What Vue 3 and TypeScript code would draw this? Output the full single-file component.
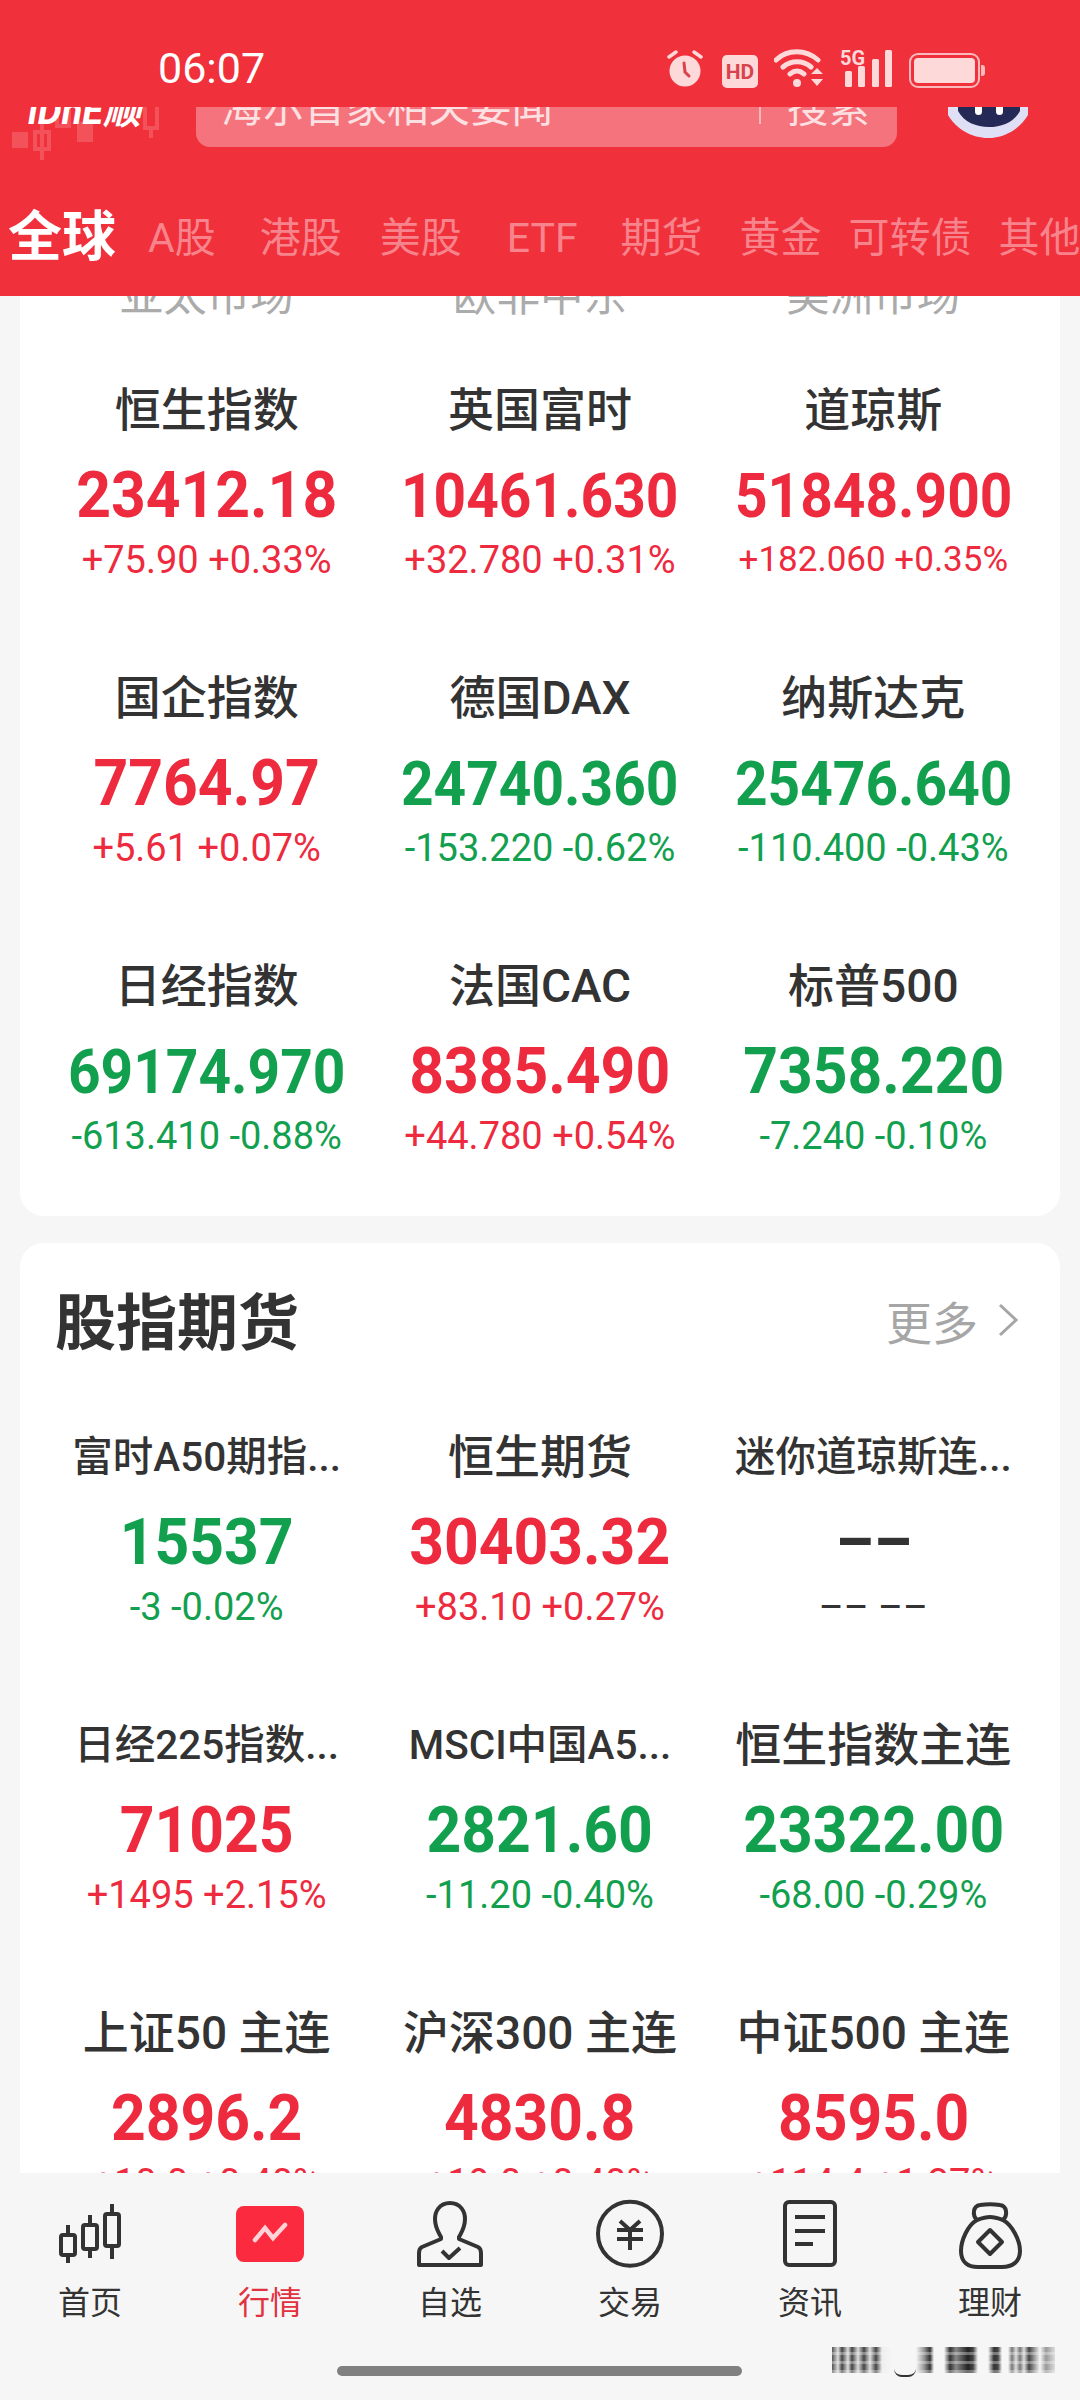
<script setup lang="ts">
type Quote = {
  name: string;
  value: string;
  change: string;
  tone: "up" | "down" | "flat";
  small?: boolean;
  tight?: boolean;
};

const tabs = [
  { label: "A股", gap: 32 },
  { label: "港股", gap: 44 },
  { label: "美股", gap: 38 },
  { label: "ETF", gap: 45 },
  { label: "期货", gap: 43 },
  { label: "黄金", gap: 37 },
  { label: "可转债", gap: 27 },
  { label: "其他", gap: 27 },
];
const markets = ["亚太市场", "欧非中东", "美洲市场"];

const globalQuotes: Quote[] = [
  { name: "恒生指数", value: "23412.18", change: "+75.90 +0.33%", tone: "up" },
  { name: "英国富时", value: "10461.630", change: "+32.780 +0.31%", tone: "up" },
  { name: "道琼斯", value: "51848.900", change: "+182.060 +0.35%", tone: "up", tight: true },
  { name: "国企指数", value: "7764.97", change: "+5.61 +0.07%", tone: "up" },
  { name: "德国DAX", value: "24740.360", change: "-153.220 -0.62%", tone: "down" },
  { name: "纳斯达克", value: "25476.640", change: "-110.400 -0.43%", tone: "down" },
  { name: "日经指数", value: "69174.970", change: "-613.410 -0.88%", tone: "down" },
  { name: "法国CAC", value: "8385.490", change: "+44.780 +0.54%", tone: "up" },
  { name: "标普500", value: "7358.220", change: "-7.240 -0.10%", tone: "down" },
];

const futures: Quote[] = [
  { name: "富时A50期指...", value: "15537", change: "-3 -0.02%", tone: "down", small: true },
  { name: "恒生期货", value: "30403.32", change: "+83.10 +0.27%", tone: "up" },
  { name: "迷你道琼斯连...", value: "––", change: "–– ––", tone: "flat", small: true },
  { name: "日经225指数...", value: "71025", change: "+1495 +2.15%", tone: "up", small: true },
  { name: "MSCI中国A5...", value: "2821.60", change: "-11.20 -0.40%", tone: "down", small: true },
  { name: "恒生指数主连", value: "23322.00", change: "-68.00 -0.29%", tone: "down" },
  { name: "上证50 主连", value: "2896.2", change: "+10.0 +0.40%", tone: "up" },
  { name: "沪深300 主连", value: "4830.8", change: "+19.0 +0.40%", tone: "up" },
  { name: "中证500 主连", value: "8595.0", change: "+114.4 +1.37%", tone: "up" },
];

const navItems = ["首页", "行情", "自选", "交易", "资讯", "理财"];
</script>

<template>
  <div class="page">
    <header class="header">
      <div class="status">
        <span class="time">06:07</span>
        <div class="status-icons">
          <svg class="alarm" width="36" height="38" viewBox="0 0 36 38">
            <circle cx="18" cy="21" r="15.5" fill="#fdd9da" />
            <path d="M2 7l7-5M34 7l-7-5" stroke="#fdd9da" stroke-width="3.4" stroke-linecap="round" />
            <path d="M17 13l1 9 4 4" stroke="#d8434c" stroke-width="3" fill="none" stroke-linecap="round" />
          </svg>
          <svg width="36" height="33" viewBox="0 0 36 33">
            <rect width="36" height="33" rx="5" fill="#fdd9da" />
            <text x="18" y="24" text-anchor="middle" class="hd">HD</text>
          </svg>
          <svg width="50" height="39" viewBox="0 0 50 39">
            <path d="M2 11C13 0 32 0 44 11M9 18C17 11 29 11 37 18M16 25c5-4 9-4 14 0" stroke="#fdd9da" stroke-width="5" fill="none" stroke-linecap="round" />
            <circle cx="23" cy="34" r="4" fill="#fdd9da" />
            <path d="M37 25h12l-6-6zM37 30h12l-6 7z" fill="#fdd9da" />
          </svg>
          <svg width="53" height="39" viewBox="0 0 53 39">
            <text x="0" y="16" class="five-g">5G</text>
            <rect x="5" y="22" width="7" height="16" rx="1.5" fill="#fdd9da" />
            <rect x="18" y="17" width="7" height="21" rx="1.5" fill="#fdd9da" />
            <rect x="32" y="10" width="7" height="28" rx="1.5" fill="#fdd9da" />
            <rect x="45" y="1" width="7" height="37" rx="1.5" fill="#fdd9da" />
          </svg>
          <svg width="76" height="35" viewBox="0 0 76 35">
            <rect x="1" y="1" width="69" height="33" rx="8" fill="none" stroke="#fbb9bc" stroke-width="2" />
            <rect x="5" y="5" width="61" height="25" rx="4" fill="#fdd9da" />
            <path d="M72 12h1c2 0 3 1 3 3v5c0 2-1 3-3 3h-1z" fill="#fbb9bc" />
          </svg>
        </div>
      </div>

      <div class="search-row">
        <svg class="candles" width="160" height="60" viewBox="0 0 160 60">
          <g fill="#f4525b">
            <rect x="12" y="25" width="16" height="16" />
            <rect x="77" y="15" width="16" height="20" />
          </g>
          <g fill="none" stroke="#f4525b" stroke-width="4">
            <path d="M35 25h14v17H35zM42 15v38" />
            <path d="M57 0v19h12V0" />
            <path d="M145 0v21h12V0M151 21v10" />
          </g>
        </svg>
        <span class="logo">iDnE顺</span>
        <div class="search">
          <span class="search-text">海尔首家相关要闻</span>
          <i class="search-line"></i>
          <span class="search-btn">搜索</span>
        </div>
        <svg class="robot" width="84" height="44" viewBox="0 0 84 44">
          <path d="M2 0H82V18C74 32 58 41 42 41S10 32 2 18Z" fill="#dfe0f6" />
          <path d="M12 0H74V14C68 25 56 30 43 30S18 25 12 14Z" fill="#242a55" />
          <rect x="29" y="0" width="7" height="18" rx="3.5" fill="#fff" />
          <rect x="50" y="0" width="7" height="18" rx="3.5" fill="#fff" />
        </svg>
      </div>

      <nav class="tabs">
        <span class="tab-active">全球</span>
        <span v-for="tab in tabs" :key="tab.label" class="tab" :style="{ marginLeft: tab.gap + 'px' }">{{ tab.label }}</span>
      </nav>
    </header>

    <main class="content">
      <section class="card card-top">
        <div class="markets">
          <span v-for="m in markets" :key="m">{{ m }}</span>
        </div>
        <div class="grid">
          <div v-for="q in globalQuotes" :key="q.name" class="cell">
            <div class="name">{{ q.name }}</div>
            <div class="value" :class="[q.tone, { long: q.value.length > 8 }]">{{ q.value }}</div>
            <div class="change" :class="[q.tone, { tight: q.tight }]">{{ q.change }}</div>
          </div>
        </div>
      </section>

      <section class="card card-futures">
        <div class="card-head">
          <h2>股指期货</h2>
          <span class="more">更多
            <svg width="20" height="34" viewBox="0 0 20 34">
              <path d="M2 2l16 15L2 32" fill="none" stroke="#a6a6a6" stroke-width="3" />
            </svg>
          </span>
        </div>
        <div class="grid">
          <div v-for="q in futures" :key="q.name" class="cell">
            <div class="name" :class="{ small: q.small }">{{ q.name }}</div>
            <div class="value" :class="[q.tone, { long: q.value.length > 8 }]">{{ q.value }}</div>
            <div class="change" :class="q.tone">{{ q.change }}</div>
          </div>
        </div>
      </section>
    </main>

    <footer class="nav">
      <div v-for="(item, i) in navItems" :key="item" class="nav-item" :class="{ active: i === 1 }">
        <svg v-if="i === 0" width="100" height="80" viewBox="0 0 100 80" fill="none" stroke="#333" stroke-width="4">
          <path d="M28 30v38M50 20v43M72 9v55" />
          <rect x="21" y="40" width="14" height="20" rx="2" fill="#f6f6f6" />
          <rect x="43" y="30" width="14" height="24" rx="2" fill="#f6f6f6" />
          <rect x="65" y="19" width="14" height="32" rx="2" fill="#f6f6f6" />
        </svg>
        <svg v-else-if="i === 1" width="100" height="80" viewBox="0 0 100 80" fill="none">
          <rect x="16" y="11" width="68" height="56" rx="8" fill="#fb2a3f" />
          <path d="M35 45l10-12 8 10 12-13" stroke="#ffd3d7" stroke-width="4.5" stroke-linecap="round" />
        </svg>
        <svg v-else-if="i === 2" width="100" height="80" viewBox="0 0 100 80" fill="none" stroke="#333" stroke-width="4" stroke-linejoin="round">
          <path d="M50 8C39 8 35 17 35 24c0 9 4 14 6 18v2l-19 8c-2 1-3 3-3 6v12h62V58c0-3-1-5-3-6l-19-8v-2c2-4 6-9 6-18C65 17 61 8 50 8z" />
          <path d="M42 56l7 7 11-10" />
        </svg>
        <svg v-else-if="i === 3" width="100" height="80" viewBox="0 0 100 80" fill="none" stroke="#333" stroke-width="4">
          <circle cx="50" cy="38.7" r="32" />
          <path d="M40 26l10 9 10-9M37 35h26M37 44h26M50 35v20" />
        </svg>
        <svg v-else-if="i === 4" width="100" height="80" viewBox="0 0 100 80" fill="none" stroke="#333" stroke-width="4">
          <rect x="25" y="7" width="50" height="63" rx="4" />
          <path d="M35 22h30M35 36h30M35 49h18" />
        </svg>
        <svg v-else width="100" height="80" viewBox="0 0 100 80" fill="none" stroke="#333" stroke-width="4" stroke-linejoin="round">
          <path d="M37 25c-5-5-4-14 3-15 6-1 14-1 20 0 7 1 8 10 3 15" />
          <path d="M37 25c11-4 15-4 26 0 9 5 17 20 17 31 0 11-8 16-18 16H38c-10 0-17-5-17-16 0-11 7-26 16-31z" />
          <path d="M50 35l12 12-12 12-12-12z" />
        </svg>
        <span class="nav-label">{{ item }}</span>
      </div>
      <div class="home-bar"></div>
      <div class="watermark"></div>
    </footer>
  </div>
</template>

<style scoped>
.page {
  position: relative;
  width: 1080px;
  height: 2400px;
  overflow: hidden;
  background: #f6f6f6;
  font-family: Roboto, "Noto Sans CJK SC", sans-serif;
  color: #333;
}
.header {
  position: relative;
  z-index: 2;
  height: 296px;
  overflow: hidden;
  background: #f0303a;
}
.status {
  position: relative;
  z-index: 2;
  height: 107px;
  display: flex;
  align-items: flex-end;
  justify-content: space-between;
  padding: 0 95px 19px 158px;
  box-sizing: border-box;
  background: #f0303a;
}
.time {
  margin-bottom: -4px;
  font-size: 43px;
  line-height: 48px;
  color: #fff;
}
.status-icons {
  display: flex;
  align-items: flex-end;
  gap: 16px;
}
.alarm {
  margin-right: 3px;
}
.hd {
  font: 700 21px Roboto, sans-serif;
  fill: #d8434c;
}
.five-g {
  font: 700 20px Roboto, sans-serif;
  fill: #fdd9da;
}
.search-row {
  position: relative;
  height: 80px;
  margin-top: -40px;
  display: flex;
  align-items: center;
}
.candles {
  position: absolute;
  left: 0;
  top: 40px;
}
.logo {
  position: absolute;
  left: 28px;
  top: 24px;
  font-size: 38px;
  line-height: 40px;
  font-weight: 700;
  font-style: italic;
  color: #fff;
}
.search {
  position: absolute;
  left: 196px;
  top: 0;
  width: 701px;
  height: 80px;
  box-sizing: border-box;
  padding-bottom: 6px;
  display: flex;
  align-items: center;
  border-radius: 14px;
  background: #f5737c;
  color: #fde0e2;
  font-size: 41.5px;
}
.search-text {
  margin-left: 25px;
  flex: 1;
}
.search-line {
  width: 2px;
  height: 40px;
  margin-right: 26px;
  background: #fbb6ba;
}
.search-btn {
  margin-right: 27px;
}
.robot {
  position: absolute;
  left: 946px;
  top: 30px;
}
.tabs {
  display: flex;
  align-items: center;
  height: 117px;
  margin-top: 32px;
  padding-left: 8px;
  white-space: nowrap;
}
.tab-active {
  font-size: 54px;
  line-height: 60px;
  font-weight: 700;
  color: #fff;
}
.tab {
  margin-top: 1px;
  font-size: 41px;
  line-height: 60px;
  color: #f7848c;
}
.content {
  height: 1877px;
  overflow: hidden;
  padding: 0 20px;
}
.card {
  background: #fff;
  border-radius: 24px;
  padding: 0 20px 22px;
}
.card-top {
  margin-top: -40px;
  margin-bottom: 27px;
}
.markets {
  display: grid;
  grid-template-columns: repeat(3, 1fr);
  height: 74px;
  padding-top: 4px;
  margin-bottom: -4px;
  line-height: 74px;
  text-align: center;
  font-size: 43.5px;
  color: #ababab;
}
.grid {
  display: grid;
  grid-template-columns: repeat(3, 1fr);
}
.cell {
  height: 288px;
  box-sizing: border-box;
  padding-top: 50px;
  text-align: center;
  white-space: nowrap;
}
.name {
  height: 60px;
  line-height: 60px;
  font-size: 46px;
  font-weight: 500;
  color: #333;
}
.name.small {
  font-size: 40.5px;
}
.value {
  height: 70px;
  margin-top: 21px;
  line-height: 70px;
  font-size: 64px;
  font-weight: 700;
  transform: scaleX(0.947);
}
.value.long {
  font-size: 62px;
  transform: scaleX(0.917);
}
.change {
  height: 46px;
  margin-top: 6px;
  line-height: 46px;
  font-size: 38px;
}
.change.tight {
  font-size: 35px;
}
.up {
  color: #ee2a3e;
}
.down {
  color: #12a04f;
}
.flat {
  color: #333;
}
.card-head {
  display: flex;
  align-items: center;
  justify-content: space-between;
  height: 134px;
  box-sizing: border-box;
  padding: 49px 22px 25px 15px;
}
.card-head h2 {
  margin: 4px 0 0;
  font-size: 61px;
  line-height: 60px;
  font-weight: 700;
  color: #333;
}
.more {
  display: flex;
  align-items: center;
  gap: 20px;
  margin-top: -4px;
  font-size: 46px;
  color: #a6a6a6;
}
.nav {
  position: relative;
  height: 227px;
  box-sizing: border-box;
  padding-top: 22px;
  display: grid;
  grid-template-columns: repeat(6, 180px);
  align-items: start;
  background: #f6f6f6;
}
.nav-item {
  display: flex;
  flex-direction: column;
  align-items: center;
}
.nav-label {
  margin-top: 8px;
  font-size: 32px;
  line-height: 40px;
  color: #333;
}
.active .nav-label {
  color: #e2313f;
}
.home-bar {
  position: absolute;
  left: 337px;
  top: 193px;
  width: 405px;
  height: 10px;
  border-radius: 5px;
  background: #808080;
}
.watermark {
  position: absolute;
  left: 832px;
  top: 174px;
  width: 223px;
  height: 26px;
  background:
    repeating-linear-gradient(0deg, rgba(246, 246, 246, 0.35) 0 3px, transparent 3px 9px),
    linear-gradient(90deg, #555 0, #ddd 6px, #444 10px, #ddd 16px, #444 20px, #ddd 26px, #444 32px, #ddd 38px, #444 44px, #eee 50px, #f6f6f6 60px, #f6f6f6 84px, #999 92px, #333 98px, #f6f6f6 102px, #f6f6f6 112px, #333 118px, #888 124px, #222 136px, #444 141px, #f6f6f6 146px, #f6f6f6 156px, #333 162px, #444 166px, #f6f6f6 170px, #f6f6f6 176px, #777 180px, #ddd 184px, #777 188px, #ddd 192px, #444 197px, #f6f6f6 208px, #999 214px, #ddd 223px);
}
.watermark::after {
  content: "";
  position: absolute;
  left: 62px;
  top: 22px;
  width: 22px;
  height: 6px;
  border-bottom: 2px solid #333;
  border-radius: 0 0 12px 12px;
}
</style>

<style>
html,
body {
  margin: 0;
  padding: 0;
}
</style>
